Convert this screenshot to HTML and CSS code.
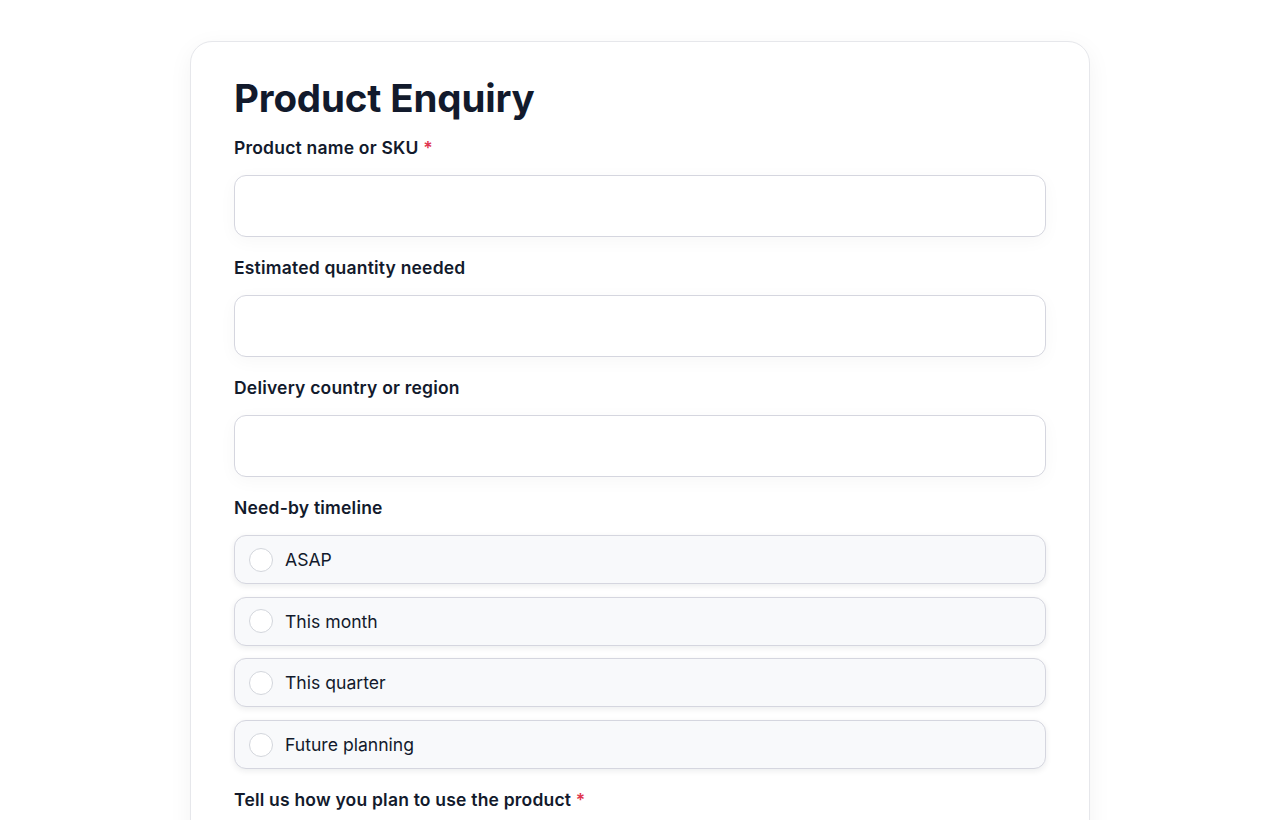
FILE: index.html
```html
<!DOCTYPE html>
<html lang="en">
   <head>
      <meta charset="UTF-8" />
      <meta name="viewport" content="width=device-width, initial-scale=1.0"/>
      <title>Product Enquiry</title>
      <link rel="stylesheet" href="styles.css">
   </head>
   <body>
      <!-- Cartão do formulário -->
      <form class="card">
         <h1>Product Enquiry</h1>
         <div class="field">
            <label class="label" for="produto">Product name or SKU <span class="req">*</span></label>
            <input class="input" id="produto" type="text">
         </div>
         <div class="field">
            <label class="label" for="qtd">Estimated quantity needed</label>
            <input class="input" id="qtd" type="text">
         </div>
         <div class="field">
            <label class="label" for="pais">Delivery country or region</label>
            <input class="input" id="pais" type="text">
         </div>
         <div class="field">
            <div class="label">Need-by timeline</div>
            <div class="options">
               <label class="option"><span class="dot"></span>ASAP</label>
               <label class="option"><span class="dot"></span>This month</label>
               <label class="option"><span class="dot"></span>This quarter</label>
               <label class="option"><span class="dot"></span>Future planning</label>
            </div>
         </div>
         <div class="field">
            <label class="label" for="uso">Tell us how you plan to use the product <span class="req">*</span></label>
            <textarea class="input area" id="uso"></textarea>
         </div>
      </form>
   </body>
</html>
```

FILE: styles.css
```css
body {
margin: 0;
background: #fff;
font-family: Inter, "Noto Sans", sans-serif;
color: #121a2c;
}
.card {
box-sizing: border-box;
width: 900px;
margin: 41px auto 40px;
padding: 32px 43px;
background: #fff;
border: 1px solid #e6e7eb;
border-radius: 22px;
box-shadow: 0 6px 24px rgba(15, 23, 42, 0.05);
}
h1 {
margin: 0 0 14px;
font-size: 38.5px;
line-height: 48px;
font-weight: 700;
letter-spacing: -0.15px;
color: #121a2c;
}
.field {
margin-bottom: 19px;
}
.label {
display: block;
font-size: 17.5px;
line-height: 24px;
font-weight: 600;
letter-spacing: 0.2px;
margin-bottom: 15px;
color: #121a2c;
}
.req {
color: #e0364f;
}
.input {
display: block;
box-sizing: border-box;
width: 100%;
height: 62px;
border: 1px solid #d5d6df;
border-radius: 12px;
background: #fff;
box-shadow: 0 4px 18px rgba(15, 23, 42, 0.035);
font: inherit;
}
.area {
height: 120px;
resize: none;
}
.options {
display: flex;
flex-direction: column;
gap: 12.7px;
}
.option {
box-sizing: border-box;
height: 49px;
display: flex;
align-items: center;
gap: 12px;
padding: 0 14px;
background: #f8f9fb;
border: 1px solid #d5d6df;
border-radius: 12px;
box-shadow: 0 2px 6px rgba(15, 23, 42, 0.08);
font-size: 17.6px;
color: #121a2c;
}
.dot {
width: 22px;
height: 22px;
border: 1px solid #d3d6dc;
border-radius: 50%;
background: #fff;
}
```
